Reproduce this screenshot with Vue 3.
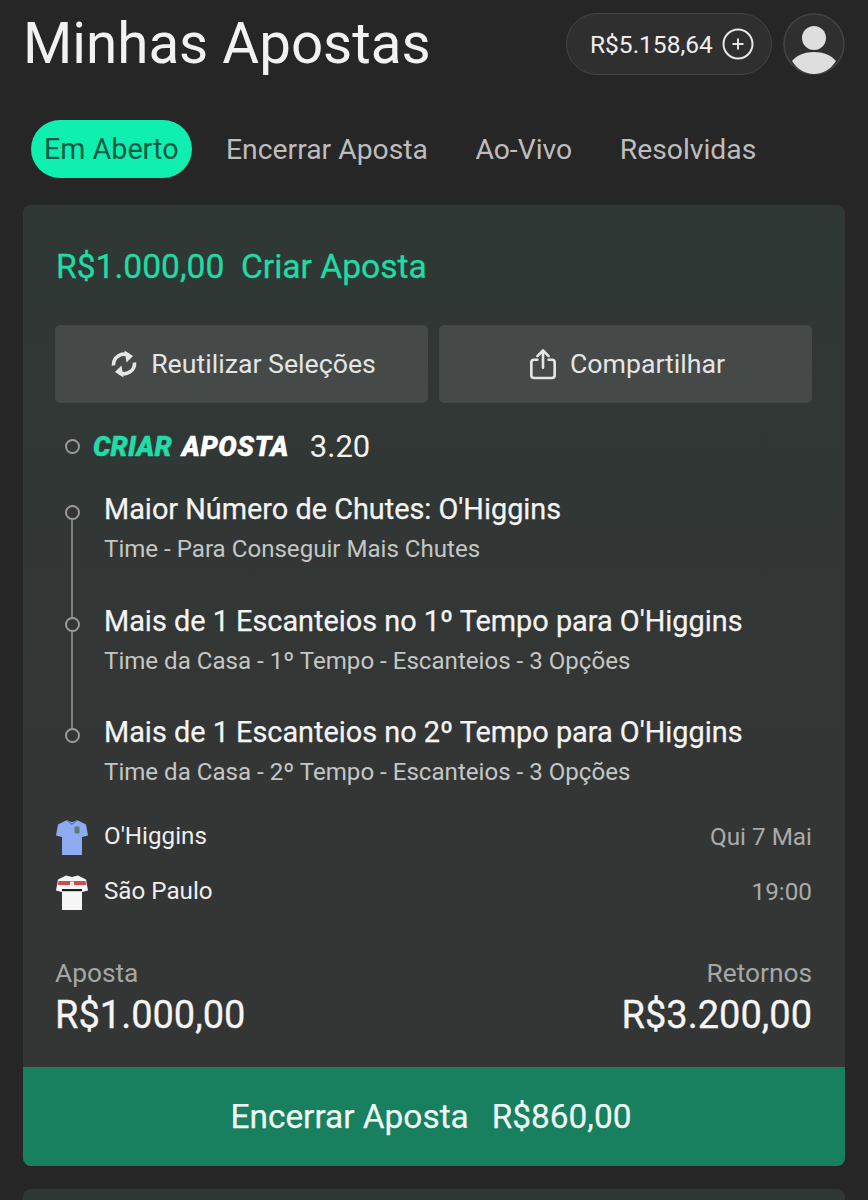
<script setup>
const tabs = ['Encerrar Aposta', 'Ao-Vivo', 'Resolvidas']
const legs = [
  { title: "Maior Número de Chutes: O'Higgins", sub: 'Time - Para Conseguir Mais Chutes' },
  { title: "Mais de 1 Escanteios no 1º Tempo para O'Higgins", sub: 'Time da Casa - 1º Tempo - Escanteios - 3 Opções' },
  { title: "Mais de 1 Escanteios no 2º Tempo para O'Higgins", sub: 'Time da Casa - 2º Tempo - Escanteios - 3 Opções' }
]
</script>

<template>
  <div class="page">
    <header class="top">
      <h1 class="title">Minhas Apostas</h1>
      <div class="balance">
        <span>R$5.158,64</span>
        <svg class="plus" viewBox="0 0 32 32" width="32" height="32" fill="none" stroke="#e6e6e6" stroke-width="2">
          <circle cx="16" cy="16" r="14.5" />
          <path d="M16 10.500v11M10.500 16h11" />
        </svg>
      </div>
      <div class="avatar">
        <svg viewBox="0 0 62 62" width="62" height="62">
          <circle cx="31" cy="31" r="30" fill="#2f2f2f" stroke="#444" stroke-width="1.5" />
          <circle cx="31" cy="25" r="12" fill="#dedede" />
          <path d="M9 48C14 42 22 39 31 39s17 3 22 9C48 56 40 61 31 61S14 56 9 48z" fill="#dedede" />
        </svg>
      </div>
    </header>

    <nav class="tabs">
      <span class="tab active">Em Aberto</span>
      <span v-for="t in tabs" :key="t" class="tab">{{ t }}</span>
    </nav>

    <section class="card">
      <div class="body">
        <div class="headline">R$1.000,00&nbsp; Criar Aposta</div>
        <div class="actions">
          <button class="action">
            <svg viewBox="0 0 28 28" width="28" height="28" fill="none" stroke="#e4e6e5" stroke-width="3.6">
              <path d="M3.500 15.500A10.500 10.500 0 0 1 19 5.500" />
              <path d="M24.500 12.500A10.500 10.500 0 0 1 9 22.500" />
              <path d="M14.500 0.500l8.500 5.500-6.500 6.500z" fill="#e4e6e5" stroke="none" />
              <path d="M13.500 27.500l-8.500-5.500 6.500-6.500z" fill="#e4e6e5" stroke="none" />
            </svg>
            Reutilizar Seleções
          </button>
          <button class="action">
            <svg viewBox="0 0 30 34" width="28" height="32" fill="none" stroke="#e4e6e5" stroke-width="2.800" stroke-linecap="round" stroke-linejoin="round">
              <path d="M9 12.500H5.500a3 3 0 0 0-3 3V29a3 3 0 0 0 3 3h19a3 3 0 0 0 3-3V15.500a3 3 0 0 0-3-3H21" />
              <path d="M15 21V2.500M9 8.500L15 2.500l6 6" />
            </svg>
            Compartilhar
          </button>
        </div>

        <div class="logo-row">
          <span class="dot"></span>
          <span class="logo"><i class="green">CRIAR</i><i class="white">APOSTA</i></span>
          <span class="odds">3.20</span>
        </div>

        <div class="legs">
          <div v-for="leg in legs" :key="leg.title" class="leg">
            <span class="dot leg-dot"></span>
            <div class="leg-title">{{ leg.title }}</div>
            <div class="leg-sub">{{ leg.sub }}</div>
          </div>
        </div>

        <div class="match">
          <div class="match-row">
            <svg class="shirt" viewBox="0 0 32 36" width="32" height="36">
              <path d="M10 0.500l6 1.500 6-1.500 8 4 2 11-6 1.500V35H6V17l-6-1.500 2-11z" fill="#8eaaf0" />
              <path d="M11 0.500l5 3.500 5-3.500" fill="none" stroke="#5d7fc9" stroke-width="1.500" />
              <rect x="18.500" y="6.500" width="5" height="7" rx="1" fill="#5b7a78" />
            </svg>
            <span class="team">O'Higgins</span>
            <span class="when">Qui 7 Mai</span>
          </div>
          <div class="match-row">
            <svg class="shirt" viewBox="0 0 32 36" width="32" height="36">
              <path d="M10 0.500l6 1.500 6-1.500 8 4 2 11-6 1.500V35H6V17l-6-1.500 2-11z" fill="#f6f6f6" />
              <path d="M2.500 6h27l.7 4H1.800z" fill="#cf4a4f" />
              <path d="M14 6.500h4v4l-2 1.500-2-1.500z" fill="#e8e8e8" />
              <path d="M6 14h20v2.200H6z" fill="#1e1e1e" />
            </svg>
            <span class="team">São Paulo</span>
            <span class="when">19:00</span>
          </div>
        </div>

        <div class="totals">
          <div>
            <div class="t-label">Aposta</div>
            <div class="t-value">R$1.000,00</div>
          </div>
          <div class="right">
            <div class="t-label">Retornos</div>
            <div class="t-value">R$3.200,00</div>
          </div>
        </div>
      </div>
      <div class="cashout"><span>Encerrar Aposta</span><span>R$860,00</span></div>
    </section>

    <div class="next"></div>
  </div>
</template>

<style>
html, body { margin: 0; background: #262626; }
</style>

<style scoped>
.page {
  width: 868px;
  height: 1200px;
  overflow: hidden;
  background: #262626;
  font-family: Roboto, "Liberation Sans", sans-serif;
  color: #f2f2f2;
  box-sizing: border-box;
  padding: 13px 23px 0;
}
.top { display: flex; align-items: center; height: 62px; }
.title { margin: 0 auto 0 0; font-size: 56.500px; font-weight: 400; line-height: 62px; color: #f2f2f2; }
.balance {
  width: 206px;
  height: 62px;
  box-sizing: border-box;
  padding: 0 17px 0 23px;
  display: flex;
  align-items: center;
  justify-content: space-between;
  border-radius: 31px;
  background: #2f2f2f;
  border: 1.500px solid #444;
  font-size: 24.500px;
  color: #eee;
}
.avatar { width: 62px; height: 62px; margin-left: 11px; }
.tabs { display: flex; align-items: center; margin: 45px 0 0 8px; height: 58px; gap: 47.500px; }
.tab { font-size: 28.300px; color: #bdbdbd; }
.tab.active {
  background: #0ff0b0;
  color: #0b5a45;
  font-size: 28.700px;
  height: 58px;
  line-height: 58px;
  border-radius: 29px;
  padding: 0 13px;
  margin-right: -13px;
}
.card {
  margin-top: 27px;
  height: 961px;
  border-radius: 8px;
  overflow: hidden;
  background: linear-gradient(#2f3835, #343635 60%);
  display: flex;
  flex-direction: column;
}
.body { flex: 1; padding: 0 33px 0 32px; display: flex; flex-direction: column; }
.headline { margin: 42px 0 0 1px; font-size: 33.600px; font-weight: 400; line-height: 40px; color: #1fdca5; -webkit-text-stroke: .3px #1fdca5; }
.actions { display: flex; gap: 11px; margin-top: 38px; }
.action {
  flex: 1;
  height: 78px;
  box-sizing: border-box;
  padding: 0 0 0 3px;
  display: flex;
  align-items: center;
  justify-content: center;
  gap: 13px;
  border: none;
  border-radius: 5px;
  background: #454a49;
  color: #e4e6e5;
  font: 400 26.700px Roboto, sans-serif;
}
.logo-row { display: flex; align-items: center; margin-top: 27px; height: 32px; padding-left: 10px; }
.dot {
  width: 11px;
  height: 11px;
  border: 2px solid #9a9a9a;
  border-radius: 50%;
  box-sizing: content-box;
}
.logo { display: flex; gap: 10px; margin-left: 13px; font-size: 27.500px; font-weight: 900; color: #fff; -webkit-text-stroke: .4px currentColor; }
.green { color: #20dca6; }
.white { letter-spacing: .5px; }
.odds { margin-left: 21px; font-size: 31px; color: #f0f0f0; }
.legs { position: relative; margin-top: 30px; }
.legs::before {
  content: '';
  position: absolute;
  left: 16px;
  top: 20px;
  height: 225px;
  width: 2px;
  background: #7d7f7e;
}
.leg { position: relative; height: 111.500px; padding-left: 49px; }
.leg-dot { position: absolute; left: 10px; top: 13px; width: 11px; height: 11px; background: #333635; }
.leg-title { font-size: 28.850px; line-height: 34px; color: #f4f4f4; font-weight: 400; -webkit-text-stroke: .25px #f4f4f4; }
.leg-sub { margin-top: 8px; font-size: 24.100px; line-height: 30px; color: #c4c6c5; }
.match { margin-top: -8.500px; padding-left: 1px; display: flex; flex-direction: column; gap: 19px; }
.match-row { display: flex; align-items: center; height: 36px; }
.shirt { margin-top: 3px; }
.team { margin-left: 16px; font-size: 24.200px; color: #eee; }
.when { margin-left: auto; font-size: 24.300px; color: #a9abaa; }
.totals { display: flex; justify-content: space-between; margin-top: 49px; }
.right { text-align: right; }
.t-label { font-size: 26.300px; line-height: 30px; color: #a5a7a6; }
.t-value { margin-top: 4px; font-size: 38px; line-height: 46px; color: #f5f5f5; font-weight: 400; -webkit-text-stroke: .3px #f5f5f5; }
.cashout {
  height: 99px;
  flex: none;
  box-sizing: border-box;
  padding-right: 6px;
  background: #18805f;
  color: #eef7f3;
  display: flex;
  align-items: center;
  justify-content: center;
  gap: 23px;
  font-size: 33.400px;
  font-weight: 400;
  -webkit-text-stroke: .25px #eef7f3;
}
.next { margin-top: 23px; height: 60px; border-radius: 8px 8px 0 0; background: #2f3835; }
</style>
